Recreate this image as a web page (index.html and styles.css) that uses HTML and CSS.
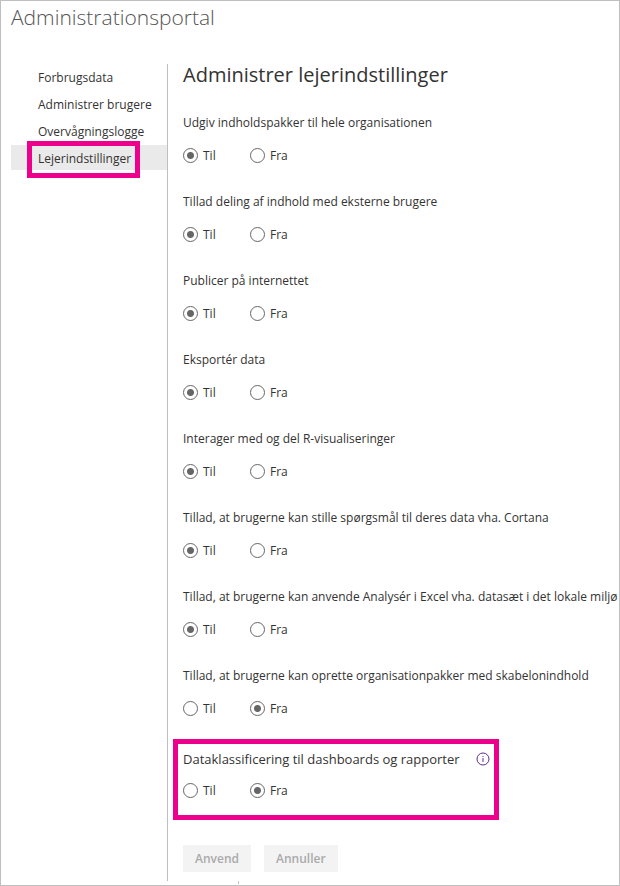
FILE: index.html
```html
<!DOCTYPE html>
<html lang="da">
<head>
<meta charset="utf-8">
<meta name="viewport" content="width=device-width, initial-scale=1">
<title>Administrationsportal</title>
<link rel="stylesheet" href="styles.css">
</head>
<body>
<div class="portal">
  <header class="portal-header"><h1>Administrationsportal</h1></header>
  <div class="portal-body">
    <nav class="sidebar">
      <ul>
        <li><a href="#forbrug">Forbrugsdata</a></li>
        <li><a href="#brugere">Administrer brugere</a></li>
        <li><a href="#logge">Overvågningslogge</a></li>
        <li class="active"><a href="#lejer" aria-current="page">Lejerindstillinger</a></li>
      </ul>
    </nav>
    <main class="content">
      <h2>Administrer lejerindstillinger</h2>
      <form class="settings">
        <fieldset>
          <legend>Udgiv indholdspakker til hele organisationen</legend>
          <div class="options">
            <label><input type="radio" name="s1" checked>Til</label>
            <label><input type="radio" name="s1">Fra</label>
          </div>
        </fieldset>
        <fieldset>
          <legend>Tillad deling af indhold med eksterne brugere</legend>
          <div class="options">
            <label><input type="radio" name="s2" checked>Til</label>
            <label><input type="radio" name="s2">Fra</label>
          </div>
        </fieldset>
        <fieldset>
          <legend>Publicer på internettet</legend>
          <div class="options">
            <label><input type="radio" name="s3" checked>Til</label>
            <label><input type="radio" name="s3">Fra</label>
          </div>
        </fieldset>
        <fieldset>
          <legend>Eksportér data</legend>
          <div class="options">
            <label><input type="radio" name="s4" checked>Til</label>
            <label><input type="radio" name="s4">Fra</label>
          </div>
        </fieldset>
        <fieldset>
          <legend>Interager med og del R-visualiseringer</legend>
          <div class="options">
            <label><input type="radio" name="s5" checked>Til</label>
            <label><input type="radio" name="s5">Fra</label>
          </div>
        </fieldset>
        <fieldset>
          <legend>Tillad, at brugerne kan stille spørgsmål til deres data vha. Cortana</legend>
          <div class="options">
            <label><input type="radio" name="s6" checked>Til</label>
            <label><input type="radio" name="s6">Fra</label>
          </div>
        </fieldset>
        <fieldset>
          <legend>Tillad, at brugerne kan anvende Analysér i Excel vha. datasæt i det lokale miljø</legend>
          <div class="options">
            <label><input type="radio" name="s7" checked>Til</label>
            <label><input type="radio" name="s7">Fra</label>
          </div>
        </fieldset>
        <fieldset>
          <legend>Tillad, at brugerne kan oprette organisationpakker med skabelonindhold</legend>
          <div class="options">
            <label><input type="radio" name="s8">Til</label>
            <label><input type="radio" name="s8" checked>Fra</label>
          </div>
        </fieldset>
        <fieldset class="marked">
          <legend>Dataklassificering til dashboards og rapporter
            <svg class="info" viewBox="0 0 14 14" aria-hidden="true"><circle cx="7" cy="7" r="6"/><path d="M7 6v4M7 4v1"/></svg>
          </legend>
          <div class="options">
            <label><input type="radio" name="s9">Til</label>
            <label><input type="radio" name="s9" checked>Fra</label>
          </div>
        </fieldset>
        <div class="actions">
          <button type="submit" disabled>Anvend</button>
          <button type="reset" disabled>Annuller</button>
        </div>
      </form>
    </main>
  </div>
  <div class="tick"></div>
</div>
</body>
</html>
```
FILE: styles.css
```css
* {
  box-sizing: border-box;
}

body {
  margin: 0;
  background: #fff;
  color: #333;
  font: 12px/20px "Open Sans", "Noto Sans", sans-serif;
}

h1, h2, ul, fieldset, legend {
  margin: 0;
  padding: 0;
  border: 0;
}

.portal {
  min-height: 100vh;
  border: 1px solid #bfbfbf;
}

.portal-header {
  padding: 2px 10px 33px;
}

h1 {
  color: #555;
  font-size: 21px;
  font-weight: 300;
  line-height: 28px;
}

.portal-body {
  display: flex;
  padding-left: 10px;
}

.sidebar {
  flex: 0 0 156px;
}

.sidebar ul {
  display: grid;
  gap: 2px;
  list-style: none;
}

.sidebar li {
  height: 25px;
  padding-left: 27px;
  line-height: 28px;
}

.sidebar a {
  position: relative;
  display: inline-block;
  color: #333;
  text-decoration: none;
}

.sidebar .active {
  background: #eaeaea;
}

/* Marker frame drawn over the active entry */
.sidebar .active a::after {
  content: "";
  position: absolute;
  inset: -4px -9px -5px -11px;
  border: 5px solid #ec008c;
}

.content {
  flex: 1;
  min-width: 0;
  padding-left: 15px;
  border-left: 1px solid #bfbfbf;
}

h2 {
  margin-bottom: 27px;
  font-size: 20px;
  font-weight: 400;
  line-height: 22px;
}

.settings {
  display: flex;
  flex-direction: column;
  align-items: flex-start;
  padding-bottom: 9px;
}

fieldset {
  min-width: 0;
  margin-bottom: 26px;
}

legend {
  display: flex;
  align-items: center;
  margin-bottom: 13px;
  white-space: nowrap;
}

.options {
  display: flex;
}

.options label {
  display: flex;
  align-items: flex-start;
  gap: 5px;
  width: 67px;
}

input[type="radio"] {
  appearance: none;
  width: 15px;
  height: 15px;
  margin: 2px 0 0;
  border: 1px solid #666;
  border-radius: 50%;
  background: #fff;
}

input[type="radio"]:checked {
  background: radial-gradient(circle, #666 3px, #fff 4px);
}

.marked {
  margin: -6px 0 25px -10px;
  padding: 5px 4px 14px 5px;
  border: 5px solid #ec008c;
}

.marked legend {
  float: left;
  gap: 16px;
  margin-bottom: 12px;
  font-size: 13px;
}

.marked .options {
  clear: both;
}

.info {
  width: 14px;
  height: 14px;
  fill: none;
  stroke: #5c2d91;
  stroke-width: 1;
}

button {
  height: 27px;
  padding: 0 12px;
  border: 0;
  background: #f3f3f3;
  color: #aaa;
  font: 600 12px/20px "Open Sans", "Noto Sans", sans-serif;
}

.actions {
  display: flex;
  gap: 13px;
}

.tick {
  width: 1px;
  height: 3px;
  margin-left: 237px;
  background: #bfbfbf;
}
```
